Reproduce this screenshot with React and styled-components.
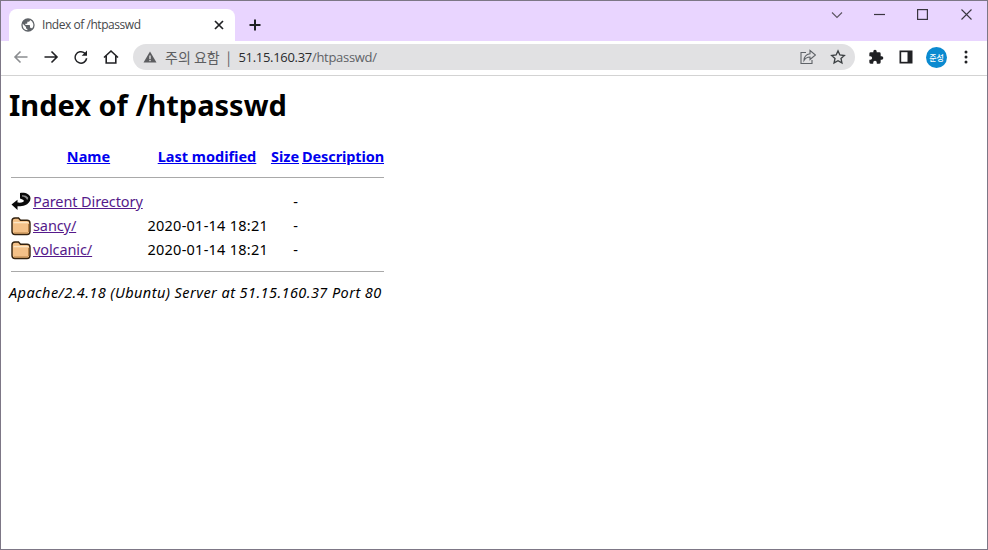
import React from 'react';
import styled, { createGlobalStyle } from 'styled-components';

const Global = createGlobalStyle`
  html, body { margin: 0; padding: 0; background: #fff; }
  #root { width: 988px; height: 550px; }
`;

const Frame = styled.div`
  width: 988px;
  height: 550px;
  box-sizing: border-box;
  border: 1px solid #7d7786;
  display: flex;
  flex-direction: column;
  overflow: hidden;
  background: #fff;
`;

const TitleBar = styled.div`
  height: 40px;
  flex: none;
  background: #e9d5ff;
  display: flex;
  align-items: flex-end;
  padding-left: 8px;
`;

const Tab = styled.div`
  width: 226px;
  height: 32px;
  box-sizing: border-box;
  background: #fff;
  border-radius: 8px 8px 0 0;
  display: flex;
  align-items: center;
  padding: 0 10px 0 11px;
  position: relative;
`;

const TabTitle = styled.span`
  font: 12px/16px "Open Sans", "Noto Sans", sans-serif;
  letter-spacing: -0.45px;
  color: #45474a;
  margin-left: 6px;
  flex: 1;
`;

const NewTab = styled.div`
  margin: 0 0 8px 12px;
  width: 16px;
  height: 16px;
  display: flex;
`;

const WindowControls = styled.div`
  margin-left: auto;
  align-self: flex-start;
  display: flex;
  align-items: center;
  height: 27px;
  padding-right: 15px;
`;

const ControlSlot = styled.div`
  width: ${({ $w }) => $w}px;
  display: flex;
  justify-content: flex-end;
`;

const Toolbar = styled.div`
  height: 32px;
  padding-bottom: 2px;
  flex: none;
  background: #fff;
  display: flex;
  align-items: center;
  padding-left: 12px;
  border-bottom: 1px solid #d3d3d3;
`;

const NavButton = styled.div`
  width: 16px;
  height: 16px;
  flex: none;
  margin-right: ${({ $gap }) => $gap ?? 14}px;
  display: flex;
`;

const Omnibox = styled.div`
  width: 722px;
  height: 26px;
  flex: none;
  background: #e1e1e3;
  border-radius: 13px;
  display: flex;
  align-items: center;
  padding-left: 10px;
  box-sizing: border-box;
`;

const SecurityText = styled.span`
  font: 14px/18px "Noto Sans CJK KR", sans-serif;
  color: #5d5e61;
  margin-left: 8px;
  white-space: pre;
`;

const Divider = styled.span`
  font: 14px/18px "Noto Sans CJK KR", sans-serif;
  color: #5d5e61;
  margin-left: 7px;
`;

const UrlHost = styled.span`
  font: 13px/18px "Open Sans", "Noto Sans", sans-serif;
  letter-spacing: -0.3px;
  color: #2a2b2d;
  margin-left: 8px;
`;

const UrlPath = styled.span`
  font: 13px/18px "Open Sans", "Noto Sans", sans-serif;
  letter-spacing: -0.3px;
  color: #606266;
`;

const OmniIcons = styled.div`
  margin-left: auto;
  display: flex;
  align-items: center;
  gap: 14px;
  padding-right: 9px;
`;

const ToolIcons = styled.div`
  display: flex;
  align-items: center;
  margin-left: 13px;
`;

const ToolIcon = styled.div`
  width: 16px;
  height: 16px;
  flex: none;
  display: flex;
  margin-right: ${({ $gap }) => $gap ?? 14}px;
`;

const Avatar = styled.div`
  width: 21px;
  height: 21px;
  flex: none;
  border-radius: 50%;
  background: #0b8ad0;
  color: #fff;
  font: 500 8px/21px "Noto Sans CJK KR", sans-serif;
  text-align: center;
  margin-right: 11px;
`;

const Page = styled.main`
  flex: 1;
  padding: 7px 8px 8px;
  color: #000;
  font: 14.5px/24px "Noto Sans", "Noto Sans CJK KR", sans-serif;
`;

const Heading = styled.h1`
  font: 700 29px/44px "Noto Sans", "Noto Sans CJK KR", sans-serif;
  margin: 0 0 18px;
`;

const Listing = styled.table`
  border-collapse: separate;
  border-spacing: 2px 0;
  width: 377px;
  table-layout: fixed;
`;

const Th = styled.th`
  padding: 0 0 2px;
  font-weight: 700;
  line-height: 22px;
  text-align: center;
  white-space: nowrap;
  width: ${({ $w }) => $w}px;
  letter-spacing: ${({ $spacing }) => $spacing || 0}px;
`;

const RuleCell = styled.th`
  padding: 0;
`;

const IconCell = styled.td`
  padding: 0;
  height: 24px;
`;

const Td = styled.td`
  padding: 0 ${({ $pad }) => $pad || 0}px 2px 0;
  line-height: 22px;
  white-space: nowrap;
  letter-spacing: ${({ $spacing }) => $spacing || 0}px;
  text-align: ${({ $align }) => $align || 'left'};
`;

const HeadLink = styled.a`
  color: #0000ee;
  text-decoration: underline;
`;

const RowLink = styled.a`
  color: #551a8b;
  text-decoration: underline;
`;

const Rule = styled.hr`
  height: 1px;
  border: 0;
  background: #a9a9a9;
  margin: ${({ $m }) => $m};
`;

const Address = styled.address`
  font-style: italic;
  line-height: 24px;
  letter-spacing: 0.43px;
  margin-top: 8px;
  white-space: nowrap;
`;

const Globe = () => (
  <svg width="16" height="16" viewBox="0 0 24 24" fill="#5f6368">
    <path d="M12 2a10 10 0 1 0 0 20 10 10 0 0 0 0-20zm-1 17.900A8 8 0 0 1 4 12c0-.6.1-1.200.2-1.800L9 15v1a2 2 0 0 0 2 2v1.900zm6.900-2.500A2 2 0 0 0 16 16h-1v-3a1 1 0 0 0-1-1H8v-2h2a1 1 0 0 0 1-1V7h2a2 2 0 0 0 2-2v-.4a8 8 0 0 1 2.900 12.800z" />
  </svg>
);

const Close = () => (
  <svg width="12" height="12" viewBox="0 0 12 12" fill="none" stroke="#202124" strokeWidth="1.700">
    <path d="M2 2l8 8M10 2l-8 8" />
  </svg>
);

const Plus = () => (
  <svg width="16" height="16" viewBox="0 0 16 16" fill="none" stroke="#202124" strokeWidth="2">
    <path d="M8 2.500v11M2.500 8h11" />
  </svg>
);

const Arrow = ({ color, left }) => (
  <svg width="16" height="16" viewBox="0 0 16 16" fill="none" stroke={color} strokeWidth="1.600" style={{ transform: left ? 'scaleX(-1)' : 'none' }}>
    <path d="M1.500 8h12.500M8.500 2.500L14 8l-5.500 5.500" />
  </svg>
);

const Reload = () => (
  <svg width="16" height="16" viewBox="0 0 16 16" fill="#202124">
    <path d="M14 1.500l-1.900 1.900A6.500 6.500 0 1 0 14.400 9.200h-1.600a5 5 0 1 1-1.800-4.700L8.700 6.800H14z" />
  </svg>
);

const Home = () => (
  <svg width="16" height="16" viewBox="0 0 16 16" fill="none" stroke="#202124" strokeWidth="1.600">
    <path d="M1 8.500L8 2l7 6.500M3.200 7v7h9.600V7" />
  </svg>
);

const Warning = () => (
  <svg width="14" height="14" viewBox="0 0 14 14" fill="#5c5d60">
    <path d="M7 1.500L13.500 12.500H.5z" />
    <rect x="6.300" y="5.500" width="1.400" height="3.500" fill="#e1e1e3" />
    <rect x="6.300" y="9.800" width="1.400" height="1.400" fill="#e1e1e3" />
  </svg>
);

const Share = () => (
  <svg width="16" height="16" viewBox="0 0 16 16" fill="none" stroke="#5f6368" strokeWidth="1.100">
    <path d="M6 3.500H1v11h11V11" />
    <path d="M10 1.500L15.500 6 10 10.500V8C7.500 8 5.500 9 4 11.500c0-3.800 2.500-6.200 6-6.800z" />
  </svg>
);

const Star = () => (
  <svg width="16" height="16" viewBox="0 0 24 24" fill="none" stroke="#3c4043" strokeWidth="2">
    <path d="M12 2.800l2.800 6.100 6.700.8-5 4.500 1.400 6.600L12 17.500l-5.900 3.300 1.400-6.600-5-4.500 6.700-.8z" />
  </svg>
);

const Puzzle = () => (
  <svg width="16" height="16" viewBox="0 0 24 24" fill="#202124">
    <path d="M20.500 11H19V7a2 2 0 0 0-2-2h-4V3.500a2.500 2.500 0 0 0-5 0V5H4a2 2 0 0 0-2 2v3.800h1.500a2.700 2.700 0 0 1 0 5.400H2V20a2 2 0 0 0 2 2h3.800v-1.500a2.700 2.700 0 0 1 5.400 0V22H17a2 2 0 0 0 2-2v-4h1.500a2.500 2.500 0 0 0 0-5z" />
  </svg>
);

const SidePanel = () => (
  <svg width="16" height="16" viewBox="0 0 16 16">
    <rect x="1.500" y="1.500" width="13" height="13" fill="#202124" />
    <rect x="3.200" y="3.200" width="6.300" height="9.600" fill="#fff" />
  </svg>
);

const Dots = () => (
  <svg width="16" height="16" viewBox="0 0 16 16" fill="#202124">
    <circle cx="8" cy="3" r="1.500" />
    <circle cx="8" cy="8" r="1.500" />
    <circle cx="8" cy="13" r="1.500" />
  </svg>
);

const Chevron = () => (
  <svg width="12" height="8" viewBox="0 0 12 8" fill="none" stroke="#5b5560" strokeWidth="1.100">
    <path d="M1 1.500l5 5 5-5" />
  </svg>
);

const Minimize = () => (
  <svg width="11" height="3" viewBox="0 0 11 3" stroke="#3a3640" strokeWidth="1.200">
    <path d="M0 1.500h11" />
  </svg>
);

const Maximize = () => (
  <svg width="11" height="11" viewBox="0 0 11 11" fill="none" stroke="#3a3640" strokeWidth="1.200">
    <rect x=".6" y=".6" width="9.800" height="9.800" />
  </svg>
);

const CloseWin = () => (
  <svg width="11" height="11" viewBox="0 0 11 11" fill="none" stroke="#3a3640" strokeWidth="1.100">
    <path d="M.5.500l10 10M10.500.500l-10 10" />
  </svg>
);

const Folder = () => (
  <svg width="20" height="20" viewBox="0 0 20 20" style={{ display: 'block' }}>
    <path d="M1 5q0-3 3-3h3.500l2 2.300H16q3 0 3 3V15.500q0 3-3 3H4q-3 0-3-3z" fill="#f4c188" stroke="#33220f" strokeWidth="1.400" />
    <path d="M2.500 6.600h15" stroke="#fde6c4" strokeWidth="1.400" />
    <path d="M3 17h14M17.500 8v8" stroke="#b98348" strokeWidth="1" />
  </svg>
);

const BackIcon = () => (
  <svg width="20" height="20" viewBox="0 0 20 20" style={{ display: 'block' }}>
    <path d="M9 1c5-.8 10.500 1 10.500 5.500 0 3.200-2.500 5.500-5.500 6.800-2.500 1-5.500 1.200-7.500 1V18L.5 12.500 6.500 7.800v2.700c2 .3 4 .2 5.500-.5 1.200-.6 1-1.700 0-2.200L9 6.500z" fill="#0a0a0a" />
    <path d="M11 3.200c2.500-.2 5 .6 6.300 2.500-.2 1-.6 1.600-1.200 2.200-.8-2.200-2.800-3.200-5.100-3.400z" fill="#8f8f8f" />
  </svg>
);

const Row = ({ icon, name, date }) => (
  <tr>
    <IconCell>{icon}</IconCell>
    <Td $spacing={-0.1}><RowLink href="#">{name}</RowLink></Td>
    <Td $align="right" $spacing={0.25}>{date}</Td>
    <Td $align="right" $pad={2}>-</Td>
    <Td />
  </tr>
);

function App() {
  return (
    <Frame>
      <Global />
      <TitleBar>
        <Tab>
          <Globe />
          <TabTitle>Index of /htpasswd</TabTitle>
          <Close />
        </Tab>
        <NewTab><Plus /></NewTab>
        <WindowControls>
          <ControlSlot $w={17}><Chevron /></ControlSlot>
          <ControlSlot $w={42}><Minimize /></ControlSlot>
          <ControlSlot $w={43}><Maximize /></ControlSlot>
          <ControlSlot $w={44}><CloseWin /></ControlSlot>
        </WindowControls>
      </TitleBar>

      <Toolbar>
        <NavButton><Arrow color="#8b8d90" left /></NavButton>
        <NavButton><Arrow color="#202124" /></NavButton>
        <NavButton><Reload /></NavButton>
        <NavButton><Home /></NavButton>
        <Omnibox>
          <Warning />
          <SecurityText>주의 요함</SecurityText>
          <Divider>|</Divider>
          <UrlHost>51.15.160.37</UrlHost>
          <UrlPath>/htpasswd/</UrlPath>
          <OmniIcons>
            <Share />
            <Star />
          </OmniIcons>
        </Omnibox>
        <ToolIcons>
          <ToolIcon $gap={14}><Puzzle /></ToolIcon>
          <ToolIcon $gap={12}><SidePanel /></ToolIcon>
          <Avatar>준성</Avatar>
          <ToolIcon><Dots /></ToolIcon>
        </ToolIcons>
      </Toolbar>

      <Page>
        <Heading>Index of /htpasswd</Heading>
        <Listing>
          <thead>
            <tr>
              <Th $w={20} />
              <Th $w={111}><HeadLink href="#">Name</HeadLink></Th>
              <Th $w={122}><HeadLink href="#">Last modified</HeadLink></Th>
              <Th $w={30}><HeadLink href="#">Size</HeadLink></Th>
              <Th $spacing={-0.1}><HeadLink href="#">Description</HeadLink></Th>
            </tr>
            <tr>
              <RuleCell colSpan={5}><Rule $m="8px 0 12px" /></RuleCell>
            </tr>
          </thead>
          <tbody>
            <Row icon={<BackIcon />} name="Parent Directory" date="" />
            <Row icon={<Folder />} name="sancy/" date="2020-01-14 18:21" />
            <Row icon={<Folder />} name="volcanic/" date="2020-01-14 18:21" />
            <tr>
              <RuleCell colSpan={5}><Rule $m="9px 0 0" /></RuleCell>
            </tr>
          </tbody>
        </Listing>
        <Address>Apache/2.4.18 (Ubuntu) Server at 51.15.160.37 Port 80</Address>
      </Page>
    </Frame>
  );
}

export default App;
